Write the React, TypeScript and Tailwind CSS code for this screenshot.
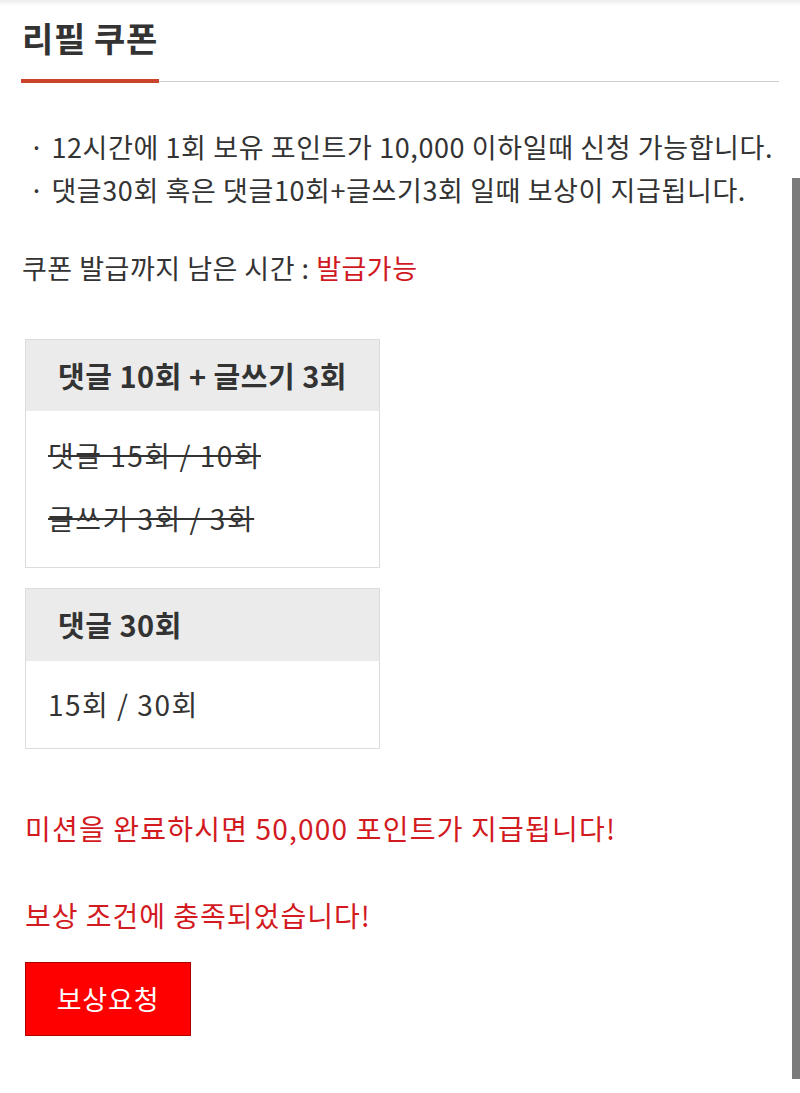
import React from "react";

const font = { fontFamily: '"Noto Sans CJK KR", "Noto Sans", sans-serif' };

export default function App() {
  return (
    <div
      className="relative w-[800px] h-[1093px] bg-white overflow-hidden text-[#333]"
      style={font}
    >
      <div className="h-[6px] bg-gradient-to-b from-[#ececec] to-white" />
      <div className="absolute right-0 top-[178px] w-[8px] h-[901px] bg-[#7b7b7b]" />

      <div className="ml-[21px] w-[758px]">
        <h1 className="mt-[12px] h-[40px] leading-[40px] text-[34px] tracking-[0.6px] font-bold text-[#333] pl-[1px]">
          리필 쿠폰
        </h1>
        <div className="mt-[21px] flex items-center h-[4px]">
          <div className="w-[138px] h-[4px] bg-[#c9442a]" />
          <div className="flex-1 h-px bg-[#cfcfcf]" />
        </div>

        <div className="mt-[42px] ml-[8px] text-[27px] leading-[43px] tracking-[0.6px]">
          <p>· 12시간에 1회 보유 포인트가 10,000 이하일때 신청 가능합니다.</p>
          <p>· 댓글30회 혹은 댓글10회+글쓰기3회 일때 보상이 지급됩니다.</p>
        </div>

        <p className="mt-[35px] text-[27px] leading-[43px] tracking-[0.5px] pl-[1px]">
          쿠폰 발급까지 남은 시간 : <span className="text-[#d0191f]">발급가능</span>
        </p>

        <div className="ml-[4px] mt-[50px] w-[355px] border border-[#dcdcdc]">
          <div className="h-[71px] bg-[#ebebeb] flex items-center pl-[32px] text-[29px] tracking-[0.5px] font-bold">
            댓글 10회 + 글쓰기 3회
          </div>
          <div className="pl-[22px] pt-[24px] pb-[29px] text-[28px] tracking-[1.5px] leading-[40px]">
            <p className="line-through decoration-2 decoration-[#333]">댓글 15회 / 10회</p>
            <p className="mt-[23px] line-through decoration-2 decoration-[#333]">글쓰기 3회 / 3회</p>
          </div>
        </div>

        <div className="ml-[4px] mt-[20px] w-[355px] border border-[#dcdcdc]">
          <div className="h-[72px] bg-[#ebebeb] flex items-center pl-[32px] text-[29px] tracking-[0.5px] font-bold">
            댓글 30회
          </div>
          <div className="pl-[22px] pt-[23px] pb-[24px] text-[28px] tracking-[1.5px] leading-[40px]">
            <p>15회 / 30회</p>
          </div>
        </div>

        <div className="ml-[4px] text-[#d21a1f] text-[28px] leading-[40px]">
          <p className="mt-[59px] tracking-[1.2px]">미션을 완료하시면 50,000 포인트가 지급됩니다!</p>
          <p className="mt-[47px] tracking-[1px]">보상 조건에 충족되었습니다!</p>
        </div>

        <button className="ml-[4px] mt-[27px] w-[166px] h-[74px] bg-[#ff0000] border border-[#b00000] text-white text-[27px] tracking-[0.8px] flex items-center justify-center">
          보상요청
        </button>
      </div>
    </div>
  );
}
